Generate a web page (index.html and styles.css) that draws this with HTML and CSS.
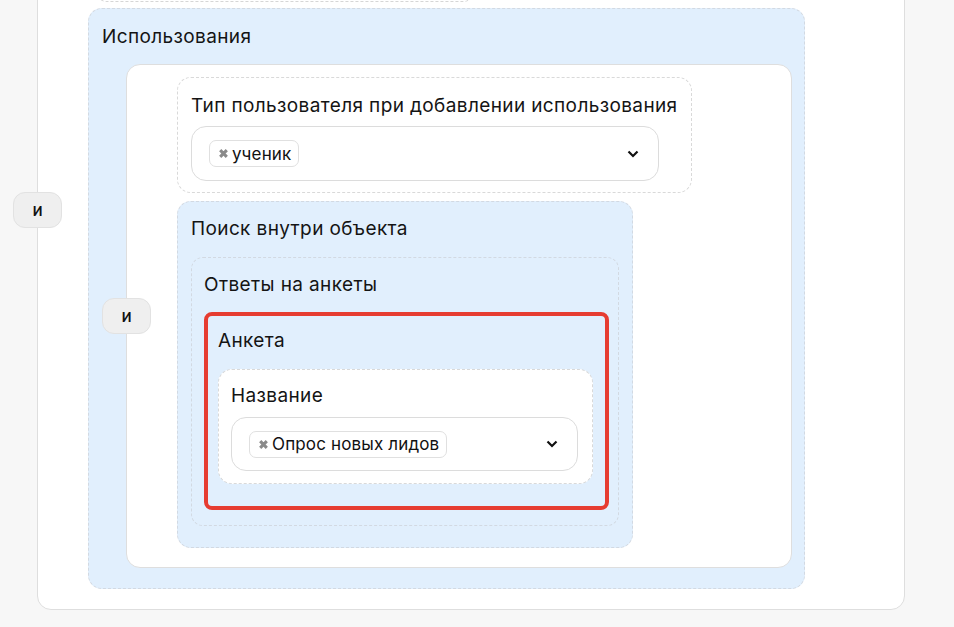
FILE: index.html
```html
<!DOCTYPE html>
<html lang="ru">
<head>
  <meta charset="UTF-8" />
  <title>Условия</title>
  <link rel="stylesheet" href="styles.css">
</head>
<body>
  <div class="card">
    <div class="cond-prev"></div>
    <span class="and-badge and-outer">и</span>

    <div class="group">
      <div class="box-title">Использования</div>
      <div class="group-body">
        <span class="and-badge and-inner">и</span>

        <div class="field field-user">
          <div class="box-title">Тип пользователя при добавлении использования</div>
          <div class="select select-wide">
            <span class="chip">
              <svg class="chip-x" viewBox="0 0 10 10"><path d="M2 2L8 8M8 2L2 8" /></svg>
              ученик
            </span>
            <svg class="chevron" viewBox="0 0 12 8"><path d="M1.5 1.5L6 6L10.5 1.5" /></svg>
          </div>
        </div>

        <div class="group group-search">
          <div class="box-title">Поиск внутри объекта</div>
          <div class="subgroup">
            <div class="box-title">Ответы на анкеты</div>
            <div class="subgroup subgroup-marked">
              <div class="box-title">Анкета</div>
              <div class="field field-name">
                <div class="box-title">Название</div>
                <div class="select select-narrow">
                  <span class="chip">
                    <svg class="chip-x" viewBox="0 0 10 10"><path d="M2 2L8 8M8 2L2 8" /></svg>
                    Опрос новых лидов
                  </span>
                  <svg class="chevron" viewBox="0 0 12 8"><path d="M1.5 1.5L6 6L10.5 1.5" /></svg>
                </div>
              </div>
            </div>
          </div>
        </div>

      </div>
    </div>
  </div>
</body>
</html>
```

FILE: styles.css
```css
body {
  margin: 0;
  background: #f7f7f7;
  font-family: Inter, 'Noto Sans', sans-serif;
  color: #141414;
}

.card {
  position: relative;
  width: 868px;
  box-sizing: border-box;
  margin: -51px 0 0 37px;
  padding: 11px 20px 20px 50px;
  background: #fff;
  border: 1px solid #dedede;
  border-radius: 14px;
}

.cond-prev {
  width: 380px;
  height: 41px;
  box-sizing: border-box;
  margin: 0 0 6px 7px;
  border: 1px dashed #d6d6d6;
  border-radius: 12px;
}

/* Badge "и" posé sur la ligne de gauche */
.and-badge {
  position: absolute;
  width: 49px;
  height: 36px;
  box-sizing: border-box;
  display: flex;
  align-items: center;
  justify-content: center;
  background: #efefef;
  border: 1px solid #e2e2e2;
  border-radius: 12px;
  font-size: 17px;
  font-weight: 500;
  color: #111;
}

.and-outer {
  left: -25px;
  top: 242px;
}

.and-inner {
  left: -25px;
  top: 233px;
}

.box-title {
  font-size: 19px;
  letter-spacing: 0.38px;
  line-height: 26px;
  white-space: nowrap;
}

/* Groupes bleus */
.group {
  width: 717px;
  box-sizing: border-box;
  padding: 15px 12px 20px 13px;
  background: #e1effd;
  border: 1px dashed #d2d9e2;
  border-radius: 14px;
}

.group-body {
  position: relative;
  margin: 14px 0 0 24px;
  padding: 12px 12px 19px 50px;
  background: #fff;
  border: 1px solid #dedede;
  border-radius: 14px;
  display: flex;
  flex-direction: column;
  align-items: flex-start;
  gap: 8px;
}

.group-search {
  width: auto;
  padding: 14px 13px 21px 13px;
}

.subgroup {
  margin-top: 15px;
  padding: 14px 9px 15px 12px;
  border: 1px dashed #d2d9e2;
  border-radius: 12px;
}

.subgroup-marked {
  margin-top: 14px;
  padding: 12px 12px 22px 10px;
  border: 4px solid #e63c31;
  border-radius: 8px;
}

/* Champs */
.field {
  padding: 15px 13px 11px 13px;
  background: #fff;
  border: 1px dashed #d9d9d9;
  border-radius: 14px;
}

.field-name {
  margin-top: 15px;
  padding: 13px 14px 12px 12px;
}

.select {
  height: 55px;
  box-sizing: border-box;
  margin-top: 7px;
  padding: 0 19px 0 17px;
  display: flex;
  align-items: center;
  justify-content: space-between;
  background: #fff;
  border: 1px solid #dcdcdc;
  border-radius: 15px;
}

.select-wide {
  width: 468px;
}

.select-narrow {
  width: 347px;
  height: 54px;
  margin-top: 8px;
}

.chip {
  height: 27px;
  box-sizing: border-box;
  display: inline-flex;
  align-items: center;
  gap: 3px;
  padding: 0 7px 0 8px;
  border: 1px solid #e0e0e0;
  border-radius: 7px;
  font-size: 17px;
  letter-spacing: 0.15px;
  color: #111;
}

.chip-x {
  width: 11px;
  height: 11px;
  stroke: #8a8a8a;
  stroke-width: 2.8;
}

.chevron {
  width: 12px;
  height: 8px;
  fill: none;
  stroke: #111;
  stroke-width: 2.2;
}
```
